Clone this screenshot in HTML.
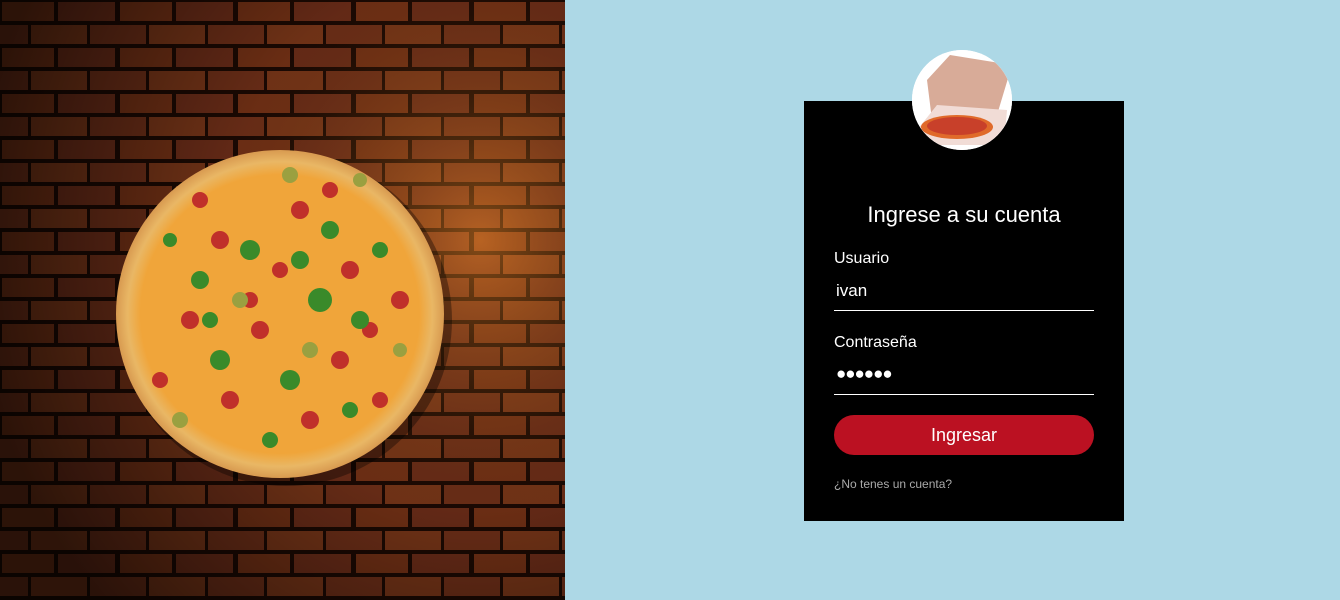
<!DOCTYPE html>
<html><head><meta charset="utf-8"><style>
html,body{margin:0;padding:0;width:1340px;height:600px;overflow:hidden;background:#add8e6;font-family:"Liberation Sans",Arial,sans-serif}
#left{position:absolute;left:0;top:0;width:565px;height:600px;overflow:hidden}
#card{position:absolute;left:804px;top:101px;width:320px;height:420px;background:#000;color:#fff}
#av{position:absolute;left:912px;top:50px;width:100px;height:100px;border-radius:50%;overflow:hidden;background:#fff}
h1{position:absolute;width:320px;margin:0;text-align:center;font-weight:normal;font-size:22px;top:101px}
.lbl{position:absolute;left:30px;font-size:16px}
.val{position:absolute;left:32px;font-size:17px}
.line{position:absolute;left:30px;width:260px;height:1px;background:#fff}
#btn{position:absolute;left:30px;top:314px;width:260px;height:40px;border-radius:20px;background:#bb1122;text-align:center;line-height:40px;font-size:18px}
#lnk{position:absolute;left:30px;top:376px;font-size:12px;color:#aaa}
</style></head><body>
<div id="left">
<svg width="565" height="600">
<defs>
<pattern id="b" width="118" height="46" patternUnits="userSpaceOnUse">
<rect width="118" height="46" fill="#1e0a03"/>
<rect x="2" y="2" width="52" height="19" fill="#7d3517"/>
<rect x="58" y="2" width="57" height="19" fill="#74301a"/>
<rect x="-28" y="25" width="56" height="19" fill="#78331a"/>
<rect x="31" y="25" width="56" height="19" fill="#823a1a"/>
<rect x="90" y="25" width="56" height="19" fill="#78331a"/>
</pattern>
<radialGradient id="g" cx="0.85" cy="0.4" r="0.9">
<stop offset="0" stop-color="#ff9a30" stop-opacity="0.45"/>
<stop offset="0.5" stop-color="#000" stop-opacity="0.15"/>
<stop offset="1" stop-color="#000" stop-opacity="0.65"/>
</radialGradient>
<radialGradient id="p" cx="0.5" cy="0.5" r="0.5">
<stop offset="0.85" stop-color="#f0a53a"/>
<stop offset="0.93" stop-color="#e9b765"/>
<stop offset="1" stop-color="#d89a50"/>
</radialGradient>
</defs>
<rect width="565" height="600" fill="url(#b)"/>
<rect width="565" height="600" fill="url(#g)"/>
<circle cx="286" cy="320" r="166" fill="#000" opacity="0.35"/>
<circle cx="280" cy="314" r="164" fill="url(#p)"/>
<g fill="#c0302a">
<circle cx="220" cy="240" r="9"/><circle cx="300" cy="210" r="9"/><circle cx="350" cy="270" r="9"/><circle cx="190" cy="320" r="9"/><circle cx="260" cy="330" r="9"/><circle cx="340" cy="360" r="9"/><circle cx="230" cy="400" r="9"/><circle cx="310" cy="420" r="9"/><circle cx="400" cy="300" r="9"/><circle cx="160" cy="380" r="8"/><circle cx="280" cy="270" r="8"/><circle cx="380" cy="400" r="8"/><circle cx="200" cy="200" r="8"/><circle cx="330" cy="190" r="8"/><circle cx="250" cy="300" r="8"/><circle cx="370" cy="330" r="8"/></g>
<g fill="#3a8a2a">
<circle cx="250" cy="250" r="10"/><circle cx="320" cy="300" r="12"/><circle cx="200" cy="280" r="9"/><circle cx="290" cy="380" r="10"/><circle cx="360" cy="320" r="9"/><circle cx="220" cy="360" r="10"/><circle cx="330" cy="230" r="9"/><circle cx="270" cy="440" r="8"/><circle cx="380" cy="250" r="8"/><circle cx="170" cy="240" r="7"/><circle cx="300" cy="260" r="9"/><circle cx="210" cy="320" r="8"/><circle cx="350" cy="410" r="8"/></g>
<g fill="#9aa040"><circle cx="290" cy="175" r="8"/><circle cx="240" cy="300" r="8"/><circle cx="310" cy="350" r="8"/><circle cx="180" cy="420" r="8"/><circle cx="400" cy="350" r="7"/><circle cx="360" cy="180" r="7"/></g>
</svg>
</div>
<div id="card">
<h1>Ingrese a su cuenta</h1>
<div class="lbl" style="top:149px">Usuario</div>
<div class="val" style="top:180px">ivan</div>
<div class="line" style="top:209px"></div>
<div class="lbl" style="top:233px">Contraseña</div>
<div class="val" style="top:263px;font-size:17px;letter-spacing:-1px">●●●●●●</div>
<div class="line" style="top:293px"></div>
<div id="btn">Ingresar</div>
<div id="lnk">¿No tenes un cuenta?</div>
</div>
<div id="av"><svg width="100" height="100">
<rect width="100" height="100" fill="#fff"/>
<polygon points="15,30 38,5 100,15 85,65 20,70" fill="#d8ab98"/>
<polygon points="5,80 25,55 95,60 92,95 20,95" fill="#f1dcd6"/>
<ellipse cx="45" cy="77" rx="36" ry="12" fill="#e06a2a"/>
<ellipse cx="45" cy="76" rx="30" ry="9" fill="#c8402a"/>
</svg></div>
</body></html>
